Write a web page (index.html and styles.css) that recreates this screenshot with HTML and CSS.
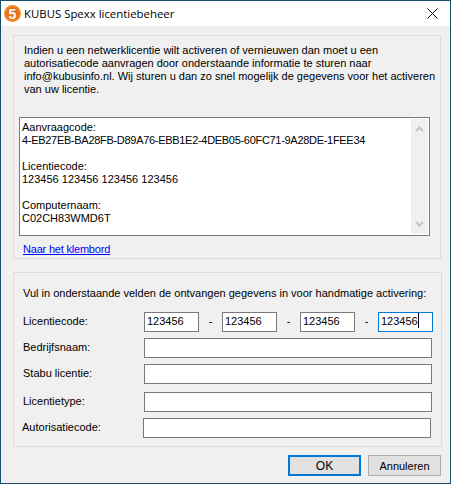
FILE: index.html

```html
<!DOCTYPE html>
<html lang="nl">
<head>
    <meta charset="UTF-8">
    <title>KUBUS Spexx licentiebeheer</title>
    <link rel="stylesheet" href="styles.css">
</head>

<body>
    <div class="window">
        <div class="titlebar">
            <svg class="app-icon" width="17" height="17" viewBox="0 0 17 17">
                <circle cx="8.500" cy="8.500" r="8.500" fill="#f08a24"/>
                <circle cx="8.500" cy="8.500" r="6.500" fill="#e8701a"/>
                <text x="8.500" y="13.500" text-anchor="middle" class="app-icon-text">5</text>
            </svg>
            <span class="title">KUBUS Spexx licentiebeheer</span>
            <svg class="close" width="11" height="11" viewBox="0 0 11 11">
                <path d="M0.500 0.500L10.500 10.500M10.500 0.500L0.500 10.500" stroke="#111" stroke-width="1" fill="none"/>
            </svg>
        </div>

        <div class="content">
            <!-- Aanvraag -->
            <div class="panel panel-request">
                <p class="intro">Indien u een netwerklicentie wilt activeren of vernieuwen dan moet u een<br>
                autorisatiecode aanvragen door onderstaande informatie te sturen naar<br>
                info@kubusinfo.nl. Wij sturen u dan zo snel mogelijk de gegevens voor het activeren<br>
                van uw licentie.</p>

                <div class="textbox">
                    <div class="textbox-text">
                        <div>Aanvraagcode:</div>
                        <div class="request-code">4-EB27EB-BA28FB-D89A76-EBB1E2-4DEB05-60FC71-9A28DE-1FEE34</div>
                        <div>&nbsp;</div>
                        <div>Licentiecode:</div>
                        <div>123456 123456 123456 123456</div>
                        <div>&nbsp;</div>
                        <div>Computernaam:</div>
                        <div>C02CH83WMD6T</div>
                    </div>
                    <div class="scrollbar">
                        <svg width="9" height="6" viewBox="0 0 9 6"><path d="M1 5L4.500 1.500L8 5" stroke="#c4c4c4" stroke-width="2" fill="none"/></svg>
                        <svg width="9" height="6" viewBox="0 0 9 6"><path d="M1 1L4.500 4.500L8 1" stroke="#c4c4c4" stroke-width="2" fill="none"/></svg>
                    </div>
                </div>
                <a class="clipboard" href="#">Naar het klembord</a>
            </div>

            <!-- Handmatige activering -->
            <div class="panel panel-manual">
                <p class="manual-intro">Vul in onderstaande velden de ontvangen gegevens in voor handmatige activering:</p>

                <div class="row">
                    <label>Licentiecode:</label>
                    <div class="code-fields">
                        <div class="field field-code">123456</div>
                        <span class="dash">-</span>
                        <div class="field field-code">123456</div>
                        <span class="dash">-</span>
                        <div class="field field-code">123456</div>
                        <span class="dash">-</span>
                        <div class="field field-code field-focus">123456<i class="caret"></i></div>
                    </div>
                </div>
                <div class="row row-company">
                    <label>Bedrijfsnaam:</label>
                    <div class="field field-wide"></div>
                </div>
                <div class="row row-stabu">
                    <label>Stabu licentie:</label>
                    <div class="field field-wide"></div>
                </div>
                <div class="row row-type">
                    <label>Licentietype:</label>
                    <div class="field field-wide"></div>
                </div>
                <div class="row row-auth">
                    <label>Autorisatiecode:</label>
                    <div class="field field-wide"></div>
                </div>
            </div>

            <div class="buttons">
                <button class="btn btn-default">OK</button>
                <button class="btn">Annuleren</button>
            </div>
        </div>
    </div>
</body>
</html>
```

FILE: styles.css

```css
html, body {
    margin: 0;
    padding: 0;
}

body {
    width: 451px;
    height: 484px;
    overflow: hidden;
    font-family: "Liberation Sans", Arial, sans-serif;
    font-size: 11px;
    color: #000;
}

.window {
    box-sizing: border-box;
    width: 451px;
    height: 484px;
    border: 1px solid #17506f;
    background-color: #f0f0f0;
}

.titlebar {
    height: 25px;
    background-color: #fff;
    display: flex;
    align-items: center;
    padding-left: 3px;
    padding-right: 12px;
}

.app-icon-text {
    font-family: "Liberation Sans", Arial, sans-serif;
    font-size: 14px;
    font-weight: bold;
    fill: #fff;
}

.title {
    margin-left: 3px;
    font-family: "Open Sans", Arial, sans-serif;
    font-size: 11.400px;
    flex: 1;
}

.content {
    padding: 9px 8px 0 12px;
}

.panel {
    box-sizing: border-box;
    border: 1px solid #dcdcdc;
}

.panel-request {
    width: 428px;
    height: 224px;
    padding: 8px 0 0 5px;
}

.intro {
    margin: 0;
    padding-left: 5px;
    line-height: 13px;
}

.textbox {
    box-sizing: border-box;
    width: 411px;
    height: 119px;
    margin-top: 21px;
    border: 1px solid #7a7a7a;
    background-color: #fff;
    display: flex;
    justify-content: space-between;
    padding: 1px;
}

.textbox-text {
    padding: 2px 0 0 1px;
    line-height: 13px;
    white-space: nowrap;
}

.request-code {
    letter-spacing: -0.300px;
}

.scrollbar {
    width: 17px;
    background-color: #f0f0f0;
    display: flex;
    flex-direction: column;
    justify-content: space-between;
    align-items: center;
    padding: 7px 0;
    box-sizing: border-box;
}

.clipboard {
    display: block;
    margin: 6px 0 0 4px;
    color: #0000ff;
    line-height: 14px;
    letter-spacing: -0.200px;
}

.panel-manual {
    width: 429px;
    height: 175px;
    margin-top: 13px;
    padding: 0 0 0 9px;
}

.manual-intro {
    margin: 13px 0 0;
    line-height: 14px;
}

.row {
    display: flex;
    align-items: center;
    margin-top: 12px;
}

.row label {
    width: 121px;
    flex: none;
    padding-bottom: 2px;
}

.row-company,
.row-stabu {
    margin-top: 6px;
}

.row-type {
    margin-top: 8px;
}

.row-auth {
    margin-top: 6px;
    margin-left: -1px;
}

.field {
    box-sizing: border-box;
    height: 20px;
    border: 1px solid #7a7a7a;
    background-color: #fff;
    line-height: 16px;
    padding-left: 2px;
}

.field-wide {
    width: 288px;
}

.code-fields {
    display: flex;
    align-items: center;
}

.field-code {
    width: 55px;
}

.dash {
    width: 23px;
    text-align: center;
    padding-bottom: 2px;
}

.field-focus {
    border-color: #0078d7;
}

.caret {
    display: inline-block;
    width: 1px;
    height: 15px;
    background-color: #000;
    vertical-align: -3px;
}

.buttons {
    display: flex;
    justify-content: flex-end;
    gap: 7px;
    margin-top: 8px;
    padding-right: 1px;
}

.btn {
    box-sizing: border-box;
    width: 73px;
    height: 21px;
    padding: 0;
    border: 1px solid #adadad;
    background-color: #e1e1e1;
    font-family: "Liberation Sans", Arial, sans-serif;
    font-size: 11px;
    color: #000;
}

.btn-default {
    border: 2px solid #0078d7;
    font-size: 12px;
}
```
